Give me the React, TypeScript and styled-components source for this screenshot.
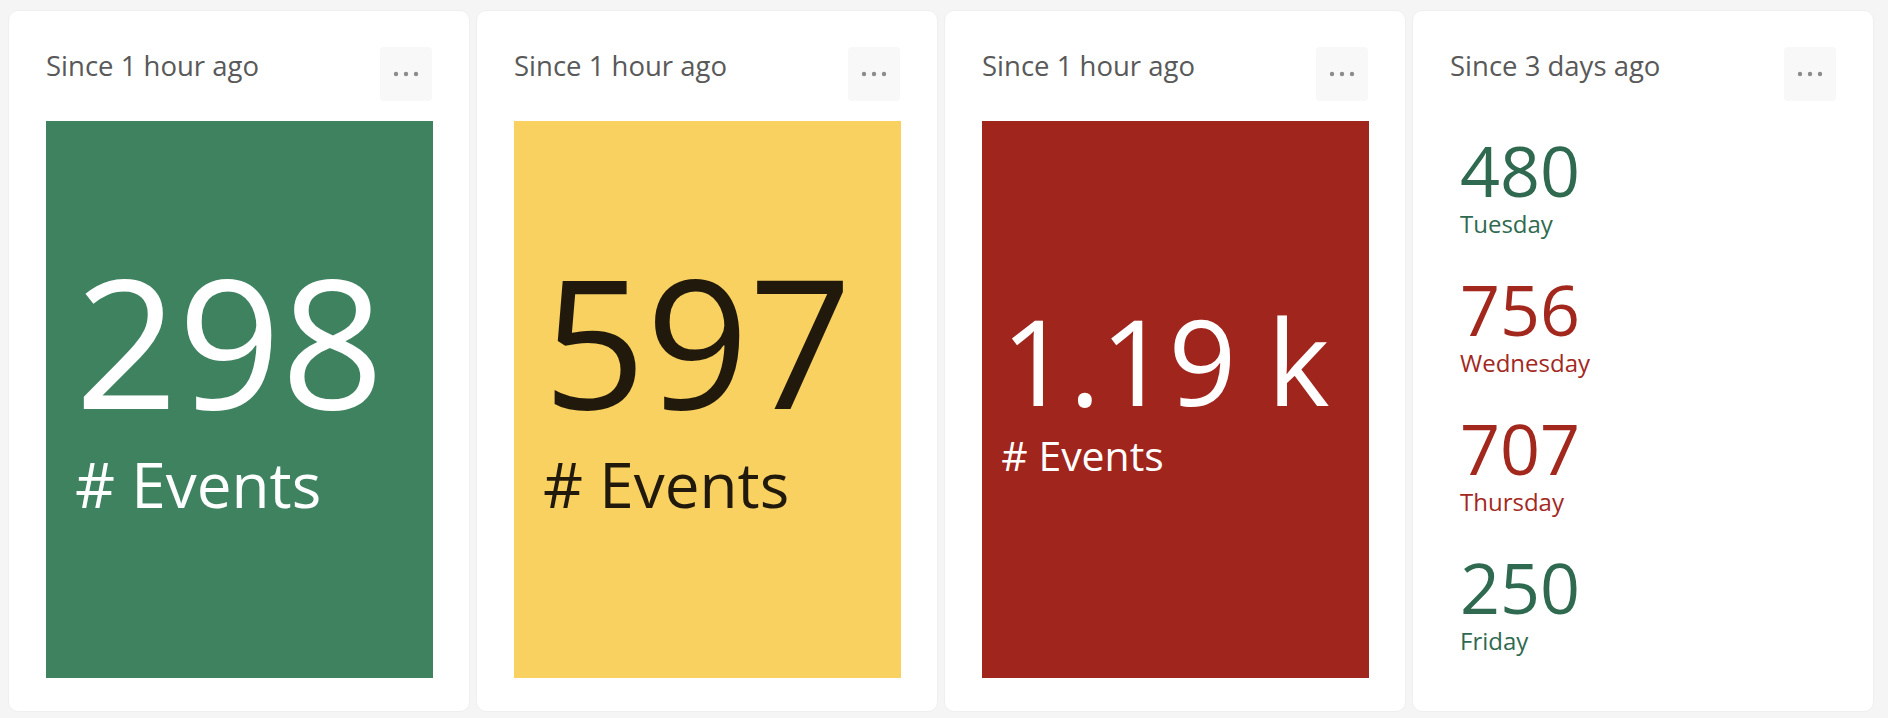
import React from 'react';
import styled, {createGlobalStyle} from 'styled-components';

const GlobalStyle = createGlobalStyle`
    body {
        margin: 0;
        background: #f5f5f5;
        font-family: "Open Sans", "Noto Sans", sans-serif;
    }
`;

const Board = styled.div`
    display: grid;
    grid-template-columns: repeat(4, 1fr);
    gap: 6px;
    height: 718px;
    box-sizing: border-box;
    padding: 10px 14px 6px 8px;
`;

const Card = styled.div`
    display: flex;
    flex-direction: column;
    background: #fff;
    border: 1px solid #efefef;
    border-radius: 10px;
    padding: 37px 36px 33px 37px;
    min-width: 0;
`;

const CardHeader = styled.div`
    display: flex;
    justify-content: space-between;
    align-items: flex-start;
    height: 54px;
    margin-bottom: 19px;
`;

const Title = styled.span`
    font-size: 27.5px;
    line-height: 36px;
    color: #595959;
`;

const MenuButton = styled.button`
    display: flex;
    align-items: center;
    justify-content: center;
    width: 52px;
    height: 54px;
    margin: -1px 1px 0 0;
    padding: 0;
    border: none;
    border-radius: 4px;
    background: #f8f8f8;
    cursor: pointer;
`;

const Tile = styled.div<{ $bg: string; $fg: string }>`
    flex: 1;
    display: flex;
    align-items: center;
    justify-content: center;
    padding-right: 20px;
    background: ${p => p.$bg};
    color: ${p => p.$fg};
`;

const TileBody = styled.div`
    display: flex;
    flex-direction: column;
    align-items: flex-start;
`;

const BigNumber = styled.div<{ $scale: number }>`
    font-size: ${p => 180 * p.$scale}px;
    line-height: 1;
    white-space: nowrap;
`;

const BigLabel = styled.div<{ $scale: number }>`
    font-size: ${p => 62 * p.$scale}px;
    line-height: 1.2;
    margin-top: ${p => 17 * p.$scale}px;
    padding-bottom: ${p => 27 * p.$scale}px;
    white-space: nowrap;
`;

const DayList = styled.div`
    flex: 1;
    display: flex;
    flex-direction: column;
    padding-left: 10px;
`;

const DayRow = styled.div<{ $color: string }>`
    flex: 1;
    display: flex;
    flex-direction: column;
    justify-content: center;
    color: ${p => p.$color};
`;

const DayValue = styled.div`
    font-size: 70px;
    line-height: 80px;
`;

const DayName = styled.div`
    font-size: 24px;
    line-height: 28px;
    padding-bottom: 14px;
`;

const GOOD = '#2f6a50';
const BAD = '#a2281e';

type TileData = { title: string; value: string; bg: string; fg: string; scale: number };

const tiles: TileData[] = [
    {title: 'Since 1 hour ago', value: '298', bg: '#3e8260', fg: '#ffffff', scale: 1},
    {title: 'Since 1 hour ago', value: '597', bg: '#f8d160', fg: '#21190c', scale: 1},
    {title: 'Since 1 hour ago', value: '1.19 k', bg: '#a0251d', fg: '#ffffff', scale: 0.66},
];

const days = [
    {value: '480', day: 'Tuesday', color: GOOD},
    {value: '756', day: 'Wednesday', color: BAD},
    {value: '707', day: 'Thursday', color: BAD},
    {value: '250', day: 'Friday', color: GOOD},
];

function Dots() {
    return (
        <svg width="26" height="6" viewBox="0 0 26 6">
            <circle cx="3" cy="3" r="2.2" fill="#8c8c8c"/>
            <circle cx="13" cy="3" r="2.2" fill="#8c8c8c"/>
            <circle cx="23" cy="3" r="2.2" fill="#8c8c8c"/>
        </svg>
    );
}

function Header({title}: { title: string }) {
    return (
        <CardHeader>
            <Title>{title}</Title>
            <MenuButton aria-label="More options"><Dots/></MenuButton>
        </CardHeader>
    );
}

function App() {
    return (
        <>
            <GlobalStyle/>
            <Board>
                {tiles.map((t, i) =>
                    <Card key={i}>
                        <Header title={t.title}/>
                        <Tile $bg={t.bg} $fg={t.fg}>
                            <TileBody>
                                <BigNumber $scale={t.scale}>{t.value}</BigNumber>
                                <BigLabel $scale={t.scale}># Events</BigLabel>
                            </TileBody>
                        </Tile>
                    </Card>
                )}
                <Card>
                    <Header title="Since 3 days ago"/>
                    <DayList>
                        {days.map(d =>
                            <DayRow key={d.day} $color={d.color}>
                                <DayValue>{d.value}</DayValue>
                                <DayName>{d.day}</DayName>
                            </DayRow>
                        )}
                    </DayList>
                </Card>
            </Board>
        </>
    );
}

export default App;
